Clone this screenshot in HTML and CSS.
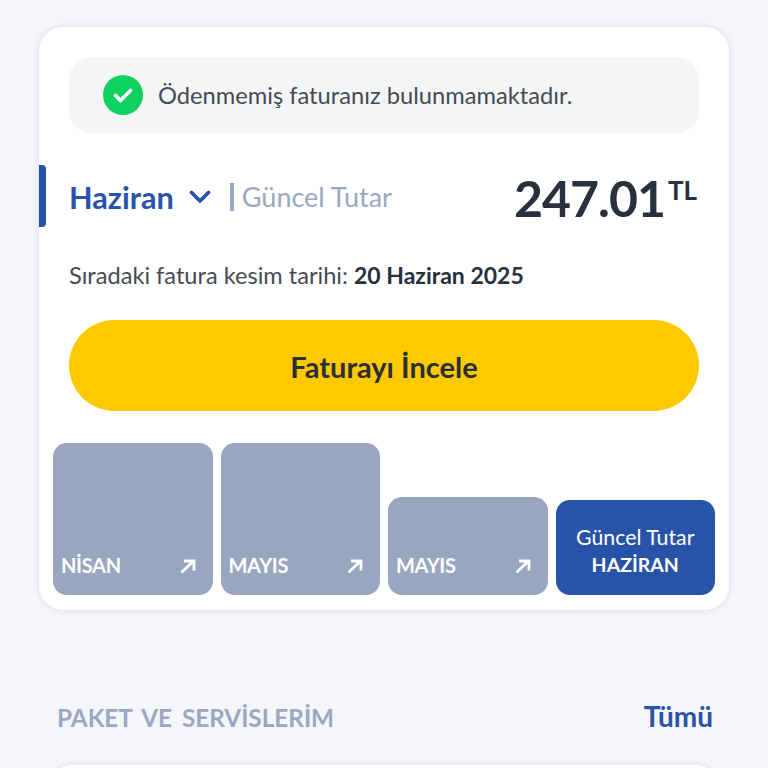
FILE: index.html
```html
<!DOCTYPE html>
<html lang="tr">
<head>
    <meta charset="UTF-8">
    <title>Faturalarım</title>
    <link rel="stylesheet" href="styles.css">
</head>
<body>

    <section class="bill-card">
        <div class="notice">
            <svg class="notice-icon" viewBox="0 0 40 40">
                <circle cx="20" cy="20" r="20" fill="#0fd162"/>
                <path d="M12.5 20.5l5 5 10-10" fill="none" stroke="#fff" stroke-width="3.6" stroke-linecap="round" stroke-linejoin="round"/>
            </svg>
            <span>Ödenmemiş faturanız bulunmamaktadır.</span>
        </div>

        <div class="month-row">
            <div class="month-left">
                <span class="month-name">Haziran</span>
                <svg class="chevron" viewBox="0 0 22 14">
                    <path d="M2.5 2.5l8.5 8.5 8.5-8.5" fill="none" stroke="#2853a8" stroke-width="3.6" stroke-linecap="round" stroke-linejoin="round"/>
                </svg>
                <span class="month-label">Güncel Tutar</span>
            </div>
            <div class="amount">247.01<sup>TL</sup></div>
        </div>

        <p class="next-date">Sıradaki fatura kesim tarihi: <strong>20 Haziran 2025</strong></p>

        <button class="btn-review">Faturayı İncele</button>

        <div class="history">
            <div class="bar bar-tall">
                <span>NİSAN</span>
                <svg class="arrow" viewBox="0 0 16 15"><path d="M1.5 13.5L13.5 2M4 2H14V11.5" fill="none" stroke="#fff" stroke-width="2.8"/></svg>
            </div>
            <div class="bar bar-tall">
                <span>MAYIS</span>
                <svg class="arrow" viewBox="0 0 16 15"><path d="M1.5 13.5L13.5 2M4 2H14V11.5" fill="none" stroke="#fff" stroke-width="2.8"/></svg>
            </div>
            <div class="bar bar-short">
                <span>MAYIS</span>
                <svg class="arrow" viewBox="0 0 16 15"><path d="M1.5 13.5L13.5 2M4 2H14V11.5" fill="none" stroke="#fff" stroke-width="2.8"/></svg>
            </div>
            <div class="bar-current">
                <span class="current-label">Güncel Tutar</span>
                <strong>HAZİRAN</strong>
            </div>
        </div>
    </section>

    <div class="section-head">
        <h2>PAKET VE SERVİSLERİM</h2>
        <a href="#">Tümü</a>
    </div>

    <div class="next-clip">
        <div class="next-card"></div>
    </div>

</body>
</html>
```

FILE: styles.css
```css
* {
    margin: 0;
    padding: 0;
    box-sizing: border-box;
}

html, body {
    height: 768px;
    overflow: hidden;
}

body {
    font-family: 'Lato', 'Noto Sans', sans-serif;
    background-color: #f4f6f9;
    color: #27303f;
    padding: 27px 39px 0;
}

.bill-card {
    position: relative;
    height: 583px;
    padding: 30px 30px 0;
    background: #fff;
    border-radius: 24px;
    box-shadow: 0 0 6px rgba(40, 50, 80, 0.14);
}

.notice {
    display: flex;
    align-items: center;
    gap: 15px;
    height: 76px;
    padding-left: 34px;
    background: #f4f5f7;
    border-radius: 22px;
    font-size: 23.7px;
    color: #454b54;
}

.notice-icon {
    width: 40px;
    height: 40px;
}

.month-row {
    display: flex;
    justify-content: space-between;
    align-items: center;
    height: 62px;
    margin-top: 32px;
}

.month-row::before {
    content: '';
    position: absolute;
    left: 0;
    top: 138px;
    width: 7px;
    height: 62px;
    background: #2853a8;
    border-radius: 0 4px 4px 0;
}

.month-left {
    display: flex;
    align-items: center;
    padding-top: 2px;
}

.month-name {
    font-size: 30.7px;
    font-weight: 700;
    color: #2853a8;
}

.chevron {
    width: 22px;
    height: 14px;
    margin-left: 15px;
}

.month-label {
    margin-left: 19px;
    padding-left: 8px;
    border-left: 4px solid #9aa8c1;
    font-size: 27px;
    line-height: 28px;
    color: #9aa8c1;
}

.amount {
    margin-top: 3px;
    padding-right: 2px;
    font-size: 50px;
    font-weight: 700;
    letter-spacing: -1px;
    color: #27303f;
}

.amount sup {
    margin-left: 3px;
    font-size: 26px;
    letter-spacing: 0;
    vertical-align: 17px;
    line-height: 0;
}

.next-date {
    margin-top: 33px;
    font-size: 23.6px;
    line-height: 30px;
    color: #454b54;
}

.next-date strong {
    font-size: 23px;
    color: #27303f;
}

.btn-review {
    display: block;
    width: 100%;
    height: 91px;
    margin-top: 30px;
    padding-top: 2px;
    background: #ffc900;
    border: none;
    border-radius: 46px;
    font-family: inherit;
    font-size: 29px;
    font-weight: 700;
    color: #2b2f36;
}

.history {
    position: absolute;
    left: 14px;
    right: 14px;
    bottom: 15px;
    display: grid;
    grid-template-columns: repeat(4, 1fr);
    align-items: end;
    gap: 8px;
}

.bar, .bar-current {
    border-radius: 14px;
    color: #fff;
}

.bar {
    display: flex;
    justify-content: space-between;
    align-items: flex-end;
    padding: 0 17px 18px 8px;
    background: #99a6bf;
    font-size: 20px;
    font-weight: 700;
    letter-spacing: -0.3px;
    line-height: 24px;
}

.bar-tall {
    height: 152px;
}

.bar-short {
    height: 98px;
}

.arrow {
    width: 16px;
    height: 15px;
    margin-bottom: 3px;
}

.bar-current {
    display: flex;
    flex-direction: column;
    align-items: center;
    justify-content: center;
    height: 95px;
    padding-top: 6px;
    background: #2853a8;
    font-size: 19.5px;
    line-height: 27px;
}

.current-label {
    font-size: 21.3px;
}

.section-head {
    display: flex;
    justify-content: space-between;
    align-items: center;
    height: 34px;
    margin-top: 90px;
    padding: 0 16px 0 18px;
}

.section-head h2 {
    font-size: 24.3px;
    font-weight: 700;
    word-spacing: 4px;
    color: #9aa8c1;
}

.section-head a {
    margin-top: -3px;
    font-size: 28px;
    font-weight: 700;
    color: #2853a8;
    text-decoration: none;
}

.next-clip {
    height: 24px;
    margin: 10px -8px 0;
    padding: 21px 17px 0;
    overflow: hidden;
}

.next-card {
    height: 100px;
    background: #fff;
    border-radius: 24px;
    box-shadow: 0 0 6px rgba(40, 50, 80, 0.14);
}
```
